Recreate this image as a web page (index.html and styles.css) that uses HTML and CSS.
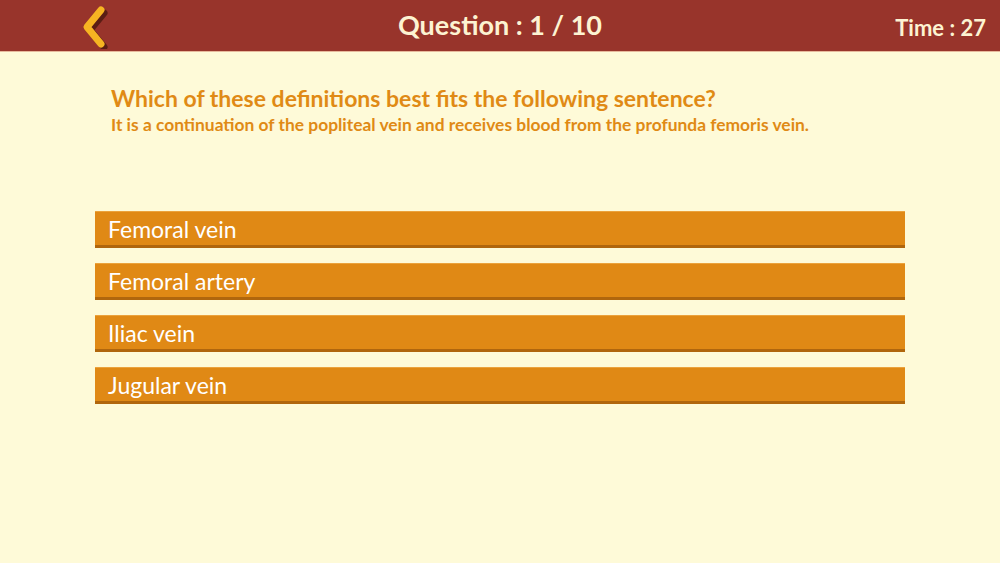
FILE: index.html
```html
<!DOCTYPE html>
<html lang="en">
<head>
    <meta charset="UTF-8">
    <meta name="viewport" content="width=device-width, initial-scale=1.0">
    <title>Quiz - Question 1</title>
    <link rel="stylesheet" href="styles.css">
</head>
<body>
    <header class="top-bar">
        <a class="back" href="#">
            <svg width="34" height="44" viewBox="0 0 34 44">
                <polyline points="22,8 8,25 22,42" class="back-shadow"/>
                <polyline points="19,5 5,22 19,39" class="back-arrow"/>
            </svg>
        </a>
        <h1 class="counter">Question : 1 / 10</h1>
        <div class="timer">Time : 27</div>
    </header>

    <main class="quiz">
        <div class="question">
            <h2>Which of these definitions best fits the following sentence?</h2>
            <p>It is a continuation of the popliteal vein and receives blood from the profunda femoris vein.</p>
        </div>

        <ul class="answers">
            <li class="answer">Femoral vein</li>
            <li class="answer">Femoral artery</li>
            <li class="answer">Iliac vein</li>
            <li class="answer">Jugular vein</li>
        </ul>
    </main>
</body>
</html>
```

FILE: styles.css
```css
body {
    font-family: Lato, "Open Sans", sans-serif;
    background-color: #fefad8;
    margin: 0;
    padding: 0;
    height: 563px;
}
.top-bar {
    height: 51px;
    background-color: #98342b;
    border-bottom: 1px solid #e7b99c;
    display: flex;
    align-items: center;
    position: relative;
}
.back {
    margin-left: 82px;
    margin-top: 3px;
    display: flex;
}
.back polyline {
    fill: none;
    stroke-width: 7;
    stroke-linecap: round;
    stroke-linejoin: round;
}
.back-shadow {
    stroke: #5a1d14;
}
.back-arrow {
    stroke: #f7b422;
}
.counter {
    position: absolute;
    left: 0;
    right: 0;
    margin: 0;
    text-align: center;
    color: #fdf3d2;
    font-size: 27px;
    font-weight: bold;
    padding-bottom: 3px;
}
.timer {
    margin-left: auto;
    margin-right: 14px;
    margin-top: 4px;
    color: #fdf3d2;
    font-size: 22px;
    font-weight: bold;
}
.quiz {
    padding: 0 95px;
}
.question {
    padding: 32px 16px 0;
    color: #e08a15;
}
.question h2 {
    margin: 0;
    font-size: 23px;
    line-height: 28px;
}
.question p {
    margin: 2px 0 0;
    font-size: 17.4px;
    font-weight: bold;
    line-height: 22px;
}
.answers {
    list-style: none;
    margin: 75px 0 0;
    padding: 0;
    display: flex;
    flex-direction: column;
    gap: 15px;
}
.answer {
    height: 33px;
    background-color: #e08915;
    border-top: 1px solid #eba23c;
    border-bottom: 3px solid #b0660d;
    color: #fff;
    font-size: 23px;
    line-height: 35px;
    padding-left: 13px;
    overflow: hidden;
}
```
